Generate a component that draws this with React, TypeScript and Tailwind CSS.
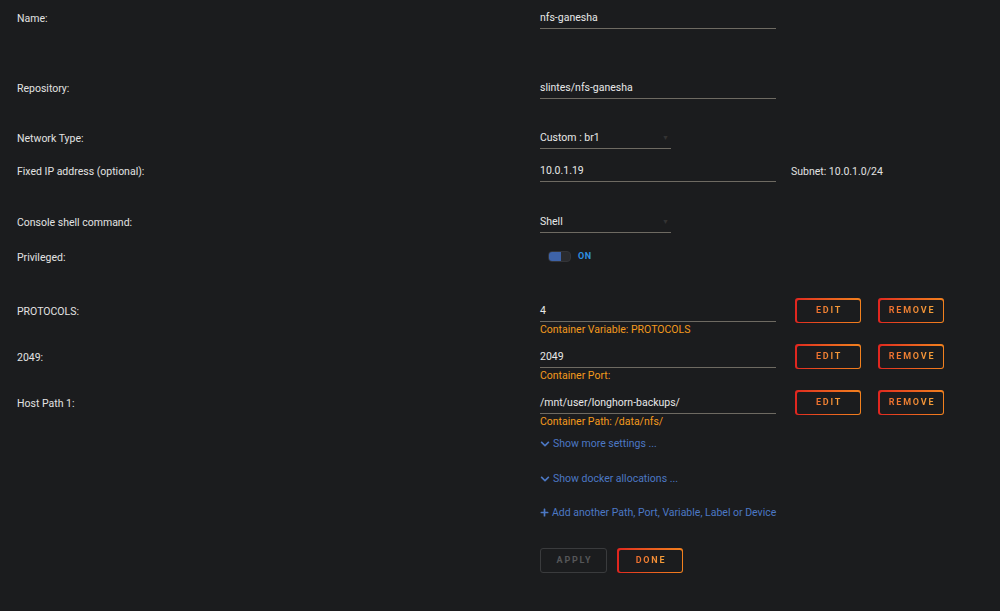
import React from 'react';
import { FaChevronDown, FaPlus } from 'react-icons/fa';

const font = { fontFamily: 'Roboto, "Open Sans", sans-serif' };

const Label = ({ children }: { children: React.ReactNode }) => (
  <div className="w-[523px] shrink-0 h-[23px] pt-[2px] flex items-center text-[10.5px] text-[#e2e2e2]">{children}</div>
);

const TextInput = ({ value, wide = true, select = false }: { value: string; wide?: boolean; select?: boolean }) => (
  <div
    className={`${wide ? 'w-[236px]' : 'w-[131px]'} h-[23px] pt-[2px] border-b border-[#6e6a62] flex items-center justify-between text-[10.5px] text-[#e8e8e8]`}
  >
    <span>{value}</span>
    {select && <span className="text-[7px] text-[#333] mr-[2px]">▼</span>}
  </div>
);

const GradButton = ({ label }: { label: string }) => (
  <div className="w-[66px] h-[25px] rounded-[3px] p-[1.5px] bg-gradient-to-r from-[#e0241f] to-[#f2811e]">
    <div className="w-full h-full rounded-[2px] bg-[#1b1c1e] flex items-center justify-center">
      <span className="text-[9px] font-bold tracking-[1.8px] pl-[2px] bg-gradient-to-r from-[#ee6a2e] to-[#f5a13a] bg-clip-text text-transparent">
        {label}
      </span>
    </div>
  </div>
);

const ConfigRow = ({ label, value, note }: { label: string; value: string; note: string }) => (
  <div className="flex">
    <Label>{label}</Label>
    <div className="flex flex-col">
      <div className="flex items-center h-[23px]">
        <TextInput value={value} />
        <div className="flex gap-[17px] ml-[19px]">
          <GradButton label="EDIT" />
          <GradButton label="REMOVE" />
        </div>
      </div>
      <div className="h-[14px] leading-[14px] pt-[1px] text-[10.5px] text-[#f39a1d]">{note}</div>
    </div>
  </div>
);

export default function App() {
  return (
    <div className="w-[1000px] h-[611px] bg-[#1b1c1e] pl-[17px] pt-[6px] overflow-hidden" style={font}>
      <div className="flex">
        <Label>Name:</Label>
        <TextInput value="nfs-ganesha" />
      </div>
      <div className="flex mt-[47px]">
        <Label>Repository:</Label>
        <TextInput value="slintes/nfs-ganesha" />
      </div>
      <div className="flex mt-[27px]">
        <Label>Network Type:</Label>
        <TextInput value="Custom : br1" wide={false} select />
      </div>
      <div className="flex mt-[10px]">
        <Label>Fixed IP address (optional):</Label>
        <TextInput value="10.0.1.19" />
        <div className="h-[23px] pt-[2px] flex items-center ml-[15px] text-[10.5px] text-[#e2e2e2]">Subnet: 10.0.1.0/24</div>
      </div>
      <div className="flex mt-[28px]">
        <Label>Console shell command:</Label>
        <TextInput value="Shell" wide={false} select />
      </div>
      <div className="flex mt-[12px]">
        <Label>Privileged:</Label>
        <div className="h-[23px] flex items-center pl-[8px] gap-[7px]">
          <div className="w-[23px] h-[11px] rounded-[4px] bg-[#2a2b2e] border border-[#333438] flex overflow-hidden">
            <div className="w-[12px] h-full bg-[#3e63a8]" />
          </div>
          <span className="text-[9px] font-bold text-[#2e8fe0] tracking-[0.5px]">ON</span>
        </div>
      </div>
      <div className="mt-[31px]">
        <ConfigRow label="PROTOCOLS:" value="4" note="Container Variable: PROTOCOLS" />
      </div>
      <div className="mt-[9px]">
        <ConfigRow label="2049:" value="2049" note="Container Port:" />
      </div>
      <div className="mt-[9px]">
        <ConfigRow label="Host Path 1:" value="/mnt/user/longhorn-backups/" note="Container Path: /data/nfs/" />
      </div>
      <div className="ml-[523px] text-[10.5px] text-[#4c78c4]">
        <div className="h-[14px] mt-[8px] pt-[1px] flex items-center gap-[3px]">
          <FaChevronDown className="w-[10px] h-[10px]" />
          <span>Show more settings ...</span>
        </div>
        <div className="h-[14px] mt-[21px] pt-[1px] flex items-center gap-[3px]">
          <FaChevronDown className="w-[10px] h-[10px]" />
          <span>Show docker allocations ...</span>
        </div>
        <div className="h-[14px] mt-[20px] pt-[1px] flex items-center gap-[3px]">
          <FaPlus className="w-[9px] h-[9px]" />
          <span>Add another Path, Port, Variable, Label or Device</span>
        </div>
        <div className="flex gap-[10px] mt-[29px]">
          <div className="w-[67px] h-[25px] rounded-[3px] border-[1.5px] border-[#3a3b3d] flex items-center justify-center">
            <span className="text-[9px] font-bold tracking-[1.8px] pl-[2px] text-[#555658]">APPLY</span>
          </div>
          <GradButton label="DONE" />
        </div>
      </div>
    </div>
  );
}
